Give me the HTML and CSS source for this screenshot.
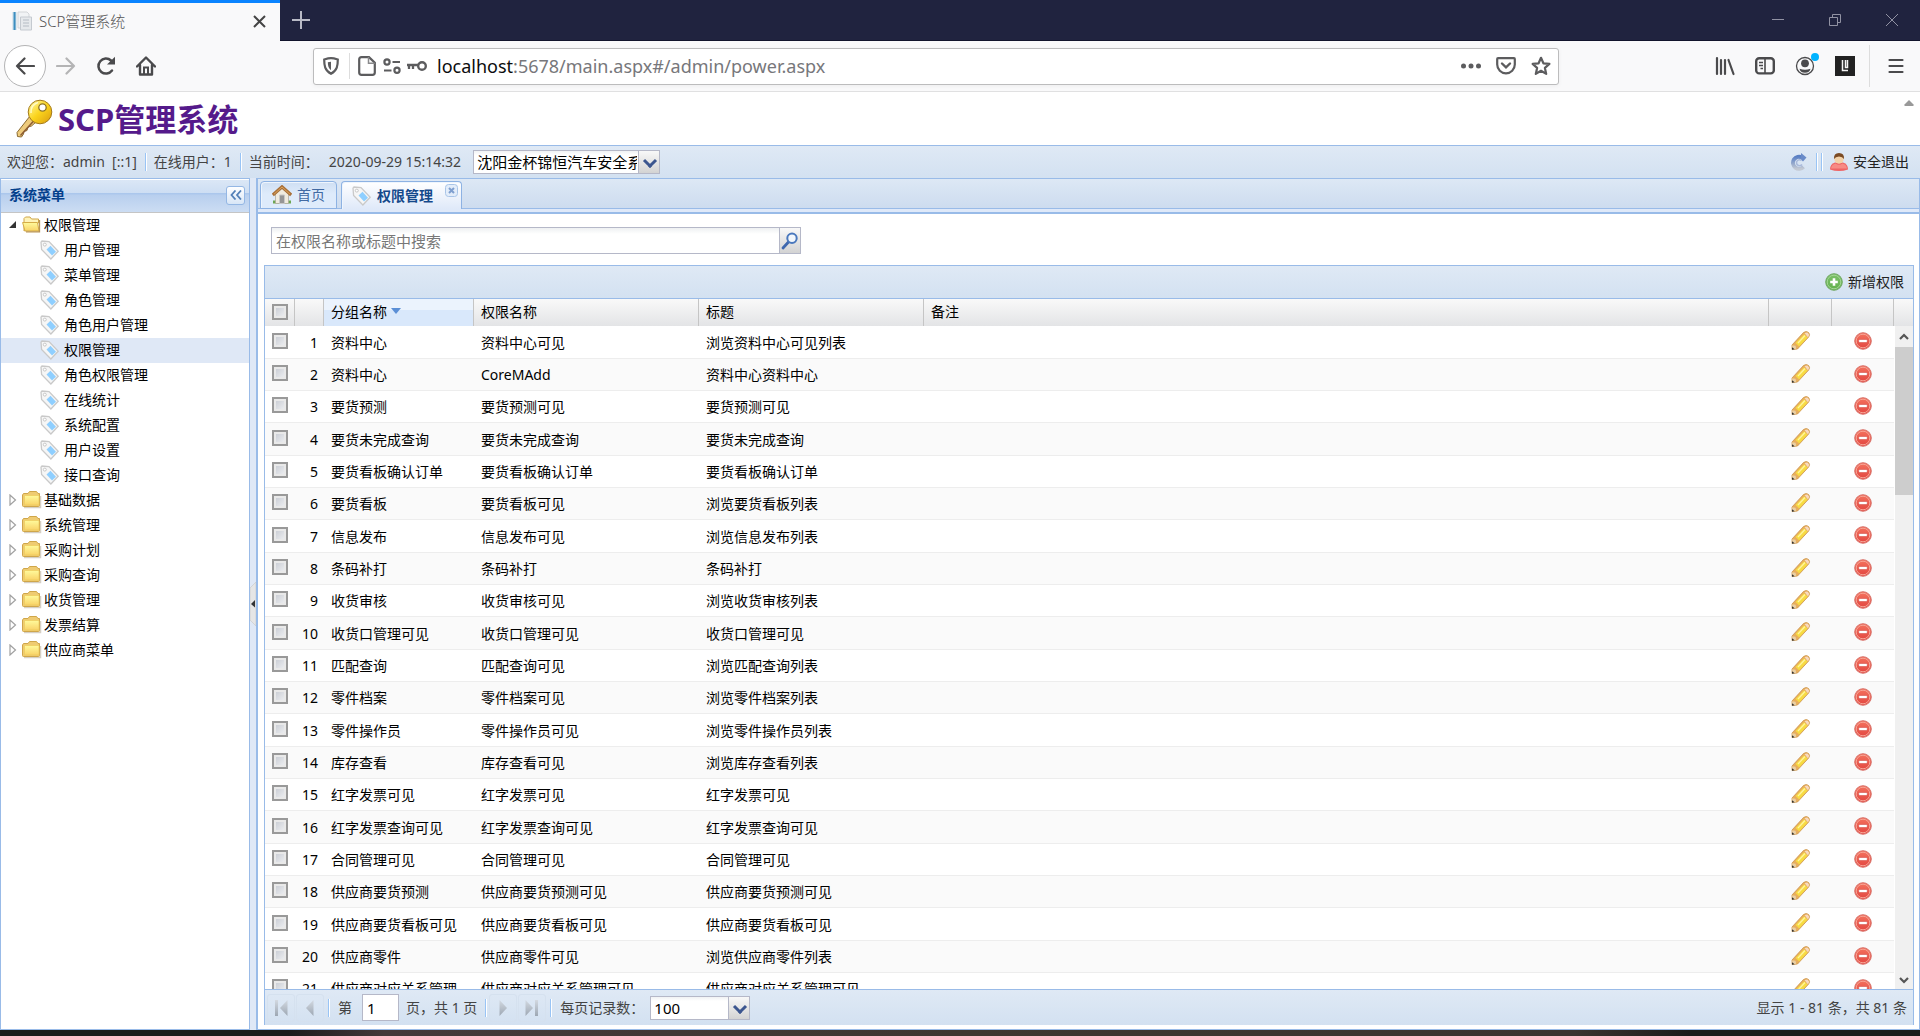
FILE: index.html
```html
<!DOCTYPE html>
<html lang="zh-CN">
<head>
<meta charset="utf-8">
<title>SCP管理系统</title>
<link rel="stylesheet" href="styles.css">
</head>
<body>
<svg class="sprite" aria-hidden="true">
  <defs>
    <linearGradient id="g-gold" x1="0" y1="0" x2="1" y2="1"><stop offset="0" stop-color="#fffbb0"/><stop offset=".5" stop-color="#fbd41c"/><stop offset="1" stop-color="#d99a10"/></linearGradient>
    <linearGradient id="g-folder" x1="0" y1="0" x2="0" y2="1"><stop offset="0" stop-color="#fffa9c"/><stop offset="1" stop-color="#f9d368"/></linearGradient>
    <linearGradient id="g-red" x1="0" y1="0" x2="0" y2="1"><stop offset="0" stop-color="#f4735f"/><stop offset="1" stop-color="#e2453f"/></linearGradient>
    <linearGradient id="g-green" x1="0" y1="0" x2="0" y2="1"><stop offset="0" stop-color="#7cc06a"/><stop offset="1" stop-color="#63b04c"/></linearGradient>
    <linearGradient id="g-gray" x1="0" y1="0" x2="0" y2="1"><stop offset="0" stop-color="#d3d9e1"/><stop offset="1" stop-color="#9da7b3"/></linearGradient>
    <linearGradient id="g-blue" x1="0" y1="0" x2="0" y2="1"><stop offset="0" stop-color="#5b80c4"/><stop offset="1" stop-color="#c3c9d3"/></linearGradient>
  </defs>
  <symbol id="tag" viewBox="0 0 20 20"><path d="M1 2.200 2 1l7 .6 9.200 9.600-7.300 7.800L1.600 9.500z" fill="#f6f6f6" stroke="#c9c9c9" stroke-width="1.300"/><path d="m6.500 9.500 4-3.700 5.500 6-4 3.700z" fill="#8fcfff"/><circle cx="4.800" cy="4.600" r="1.500" fill="#fff" stroke="#bbb" stroke-width=".8"/></symbol>
  <symbol id="folder" viewBox="0 0 20 20"><path d="M2 17.500h16.500V6" fill="none" stroke="#d5cfc4" stroke-width="1.500"/><path d="M.5 15.500V5l1-1.500h4.500L7.500 1.500h7L16 3.500h1.500v12q0 1-1 1h-15q-1 0-1-1z" fill="#efcb72" stroke="#cfa64a"/><path d="M2.500 5.500h14.500v9.500H2.500z" fill="url(#g-folder)" stroke="#edcb5c" stroke-width=".7"/></symbol>
  <symbol id="folder-open" viewBox="0 0 20 20"><path d="M2 16V3.500L3.500 2H8l1.500 2H16.500v4z" fill="#fff3b8" stroke="#cfa64a"/><path d="M.6 7.500h14.900l1.500 8.500H3z" fill="url(#g-folder)" stroke="#d5ac48"/><path d="M17.500 5v11.800H4" fill="none" stroke="#b99453" stroke-width="1.300"/></symbol>
  <symbol id="pencil" viewBox="0 0 20 20"><path d="m1 14 11.500-12.500q3-2 5 0 2 2 .2 4.500L6.500 18 1 18.600z" fill="#e8ae5c" stroke="#cb944a" stroke-width=".8"/><path d="m4.500 12 8.500-8.800 3.500 3.300-8.300 9z" fill="#f7dc42"/><path d="m7 12 7-7.500" stroke="#fff3a0" stroke-width="1.300"/><path d="m13.500 2 3-.5 1.800 2.200-1.300 2.800z" fill="#f8d9bd"/><path d="m1.200 14.300 3.300.4.800 3-4.100.9z" fill="#e9cfa4"/><path d="M1 16.200v2.500l2.600-.5z" fill="#333"/></symbol>
  <symbol id="minus" viewBox="0 0 18 18"><circle cx="9" cy="9" r="8.300" fill="url(#g-red)" stroke="#d9776f"/><circle cx="9" cy="9" r="6.800" fill="none" stroke="#f7a596"/><rect x="4.800" y="7.500" width="8.400" height="3" rx=".7" fill="#fff" stroke="#cf4038" stroke-width=".5"/></symbol>
  <symbol id="plus" viewBox="0 0 18 18"><circle cx="9" cy="9" r="8.300" fill="url(#g-green)" stroke="#73a867"/><circle cx="9" cy="9" r="6.800" fill="none" stroke="#a3d694"/><path d="M9 5.200v7.600M5.200 9h7.600" stroke="#fff" stroke-width="2.600"/></symbol>
</svg>

<div class="window">
  <header class="titlebar">
    <div class="browser-tab">
      <svg width="20" height="20" viewBox="0 0 20 20"><path d="M0 1h5v18H0z" fill="#3d8fc0"/><path d="M0 1h1.500v18H0zM3.600 1H5v18H3.600z" fill="#dfe9ef"/><path d="M6 1h9l2 2v14H6z" fill="#f1f3f5" stroke="#d3d6d9"/><path d="M8.500 6h11v13h-11z" fill="#e6e9ec" stroke="#c5cad0"/><path d="M11 9h6M11 12h6M11 15h6" stroke="#b5bcc4"/></svg>
      <span class="browser-tab-title">SCP管理系统</span>
      <button class="plain" aria-label="关闭标签页"><svg width="13" height="13" viewBox="0 0 13 13"><path d="m1 1 11 11M12 1 1 12" stroke="#444" stroke-width="2"/></svg></button>
    </div>
    <button class="plain new-tab" aria-label="新标签页"><svg width="18" height="18" viewBox="0 0 18 18"><path d="M9 0v18M0 9h18" stroke="#b9bac6" stroke-width="2"/></svg></button>
    <div class="window-controls">
      <button class="plain" aria-label="最小化"><svg width="14" height="14" viewBox="0 0 14 14"><path d="M1 6.500h12" stroke="#9192a3"/></svg></button>
      <button class="plain" aria-label="还原"><svg width="14" height="14" viewBox="0 0 14 14"><path d="M1.500 4.500h8v8h-8zM4.500 4V1.500h8v8H10" fill="none" stroke="#9192a3"/></svg></button>
      <button class="plain" aria-label="关闭"><svg width="14" height="14" viewBox="0 0 14 14"><path d="m1 1 12 12M13 1 1 13" stroke="#9192a3"/></svg></button>
    </div>
  </header>

  <nav class="navbar">
    <div class="nav-left">
      <button class="plain back" aria-label="后退"><svg width="20" height="20" viewBox="0 0 20 20"><path d="M19 10H2M9.500 2.500 2 10l7.500 7.500" fill="none" stroke="#4a4a4c" stroke-width="2.200" stroke-linecap="round" stroke-linejoin="round"/></svg></button>
      <button class="plain" aria-label="前进"><svg width="20" height="20" viewBox="0 0 20 20"><path d="M1 10h17M10.500 2.500 18 10l-7.500 7.500" fill="none" stroke="#b4b4b5" stroke-width="2.200" stroke-linecap="round" stroke-linejoin="round"/></svg></button>
      <button class="plain" aria-label="刷新"><svg width="20" height="20" viewBox="0 0 20 20"><path d="M16 14.500A7.500 7.500 0 1 1 15 4.500l2 2" fill="none" stroke="#4a4a4c" stroke-width="2.500" stroke-linecap="round"/><path d="M19 .8V8.500h-8z" fill="#4a4a4c"/></svg></button>
      <button class="plain" aria-label="主页"><svg width="20" height="20" viewBox="0 0 20 20"><path d="m1 10.500 9-9 9 9M4 9v9.500h12V9" fill="none" stroke="#4a4a4c" stroke-width="2.400" stroke-linecap="round" stroke-linejoin="round"/><path d="M8 19v-7.500h4V19" fill="none" stroke="#4a4a4c" stroke-width="2"/></svg></button>
    </div>
    <div class="urlbar">
      <span class="shield"><svg width="18" height="18" viewBox="0 0 18 18"><path d="M9 1.200c2.500 0 4.500.6 6.800 1.300 0 6-.5 11-6.800 14.300C2.700 13.500 2.200 8.500 2.200 2.500 4.500 1.800 6.500 1.200 9 1.200z" fill="none" stroke="#5c5c5e" stroke-width="2.200"/><path d="M9 4.800v8.400C6.300 11 5.900 8.500 5.800 5.200z" fill="#5c5c5e"/></svg></span>
      <svg class="ico-page" width="18" height="20" viewBox="0 0 18 20"><path d="M3.500 1.200H11l5.800 5.600v9.700q0 2.300-2.300 2.300h-11q-2.300 0-2.300-2.300v-13q0-2.300 2.300-2.300z" fill="none" stroke="#5c5c5e" stroke-width="2.200"/><path d="M10.500 1v6.300h6.300" fill="none" stroke="#8a8a8c" stroke-width="1.500"/></svg>
      <svg class="ico-perm" width="18" height="16" viewBox="0 0 18 16"><g fill="none" stroke="#5c5c5e" stroke-width="2.200"><circle cx="4" cy="4" r="2.600"/><path d="M9.500 4H17M1 12.500h7.500"/><circle cx="14" cy="12.300" r="2.600"/></g></svg>
      <svg class="ico-key" width="20" height="12" viewBox="0 0 20 12"><circle cx="15" cy="6" r="3.800" fill="none" stroke="#5c5c5e" stroke-width="2.400"/><path d="M0 5h11.500M2 5v4M6 5v4" stroke="#5c5c5e" stroke-width="2.300"/></svg>
      <span class="url"><b>localhost</b>:5678/main.aspx#/admin/power.aspx</span>
      <button class="plain" aria-label="页面操作"><svg width="20" height="6" viewBox="0 0 20 6"><g fill="#5c5c5e"><circle cx="2.500" cy="3" r="2.500"/><circle cx="10" cy="3" r="2.500"/><circle cx="17.500" cy="3" r="2.500"/></g></svg></button>
      <button class="plain" aria-label="保存到 Pocket"><svg width="20" height="18" viewBox="0 0 20 18"><path d="M2 1.200h16q.8 0 .8.800v5.500a8.800 8.800 0 0 1-17.600 0V2q0-.8.800-.8z" fill="none" stroke="#5c5c5e" stroke-width="2.200"/><path d="m6 6.500 4 3.900 4-3.900" fill="none" stroke="#5c5c5e" stroke-width="2.400" stroke-linecap="round"/></svg></button>
      <button class="plain" aria-label="加入书签"><svg width="20" height="20" viewBox="0 0 20 20"><path d="m10 1.800 2.400 5.500 6 .6-4.500 4 1.300 6L10 14.800l-5.200 3.100 1.300-6-4.500-4 6-.6z" fill="none" stroke="#5c5c5e" stroke-width="2.200" stroke-linejoin="round"/></svg></button>
    </div>
    <div class="nav-right">
      <button class="plain" aria-label="书签库"><svg width="20" height="20" viewBox="0 0 20 20"><path d="M2 2v16M6 4v14M10 4v14M13.500 4l5 14" stroke="#4a4a4c" stroke-width="2.200" stroke-linecap="round"/></svg></button>
      <button class="plain" aria-label="侧栏"><svg width="20" height="18" viewBox="0 0 20 18"><rect x="1.200" y="1.200" width="17.600" height="15.200" rx="3" fill="none" stroke="#4a4a4c" stroke-width="2.400"/><path d="M10 1v15" stroke="#4a4a4c" stroke-width="1.600"/><path d="M4 5.500h4M4 8.500h4M5.500 11.500H8" stroke="#4a4a4c" stroke-width="1.300"/></svg></button>
      <button class="plain account" aria-label="账户"><svg width="20" height="20" viewBox="0 0 20 20"><circle cx="10" cy="10" r="8.500" fill="none" stroke="#4a4a4c" stroke-width="1.300"/><circle cx="10" cy="7.300" r="3.900" fill="#4a4a4c"/><path d="M4.500 12.800q5.500 2 11 0-.8 4-5.500 4t-5.500-4z" fill="#4a4a4c"/></svg></button>
      <button class="plain" aria-label="扩展"><svg width="20" height="20" viewBox="0 0 20 20"><path d="M0 0h20v20H0z" fill="#222"/><path d="M7.500 4v10.500H13M12.500 4v7.500h-2V4" fill="none" stroke="#f4f4f4" stroke-width="1.500"/></svg></button>
      <i class="nav-sep"></i>
      <button class="plain" aria-label="菜单"><svg width="16" height="16" viewBox="0 0 16 16"><path d="M1.500 2h13M1.500 8h13M1.500 14h13" stroke="#4a4a4c" stroke-width="2.200" stroke-linecap="round"/></svg></button>
    </div>
  </nav>

  <header class="brand">
    <svg width="40" height="40" viewBox="0 0 40 40"><path d="m15 17-13 16.500.5 4 4 .5 2-3 .5-2.500 3-1 1-3.500 3.500-1L21 23z" fill="#eecb7c" stroke="#8a6a30"/><path d="M5.500 36.500 20 20.500" stroke="#8d5c33" stroke-width="1.600"/><circle cx="25" cy="13" r="11.800" fill="url(#g-gold)" stroke="#a47a1a"/><circle cx="27.500" cy="8.500" r="3.700" fill="#fff" stroke="#8d7322" stroke-width="1.300"/><path d="M16 14q-.5-8 7-10.500" fill="none" stroke="#fffbc8" stroke-width="1.500"/></svg>
    <h1>SCP管理系统</h1>
    <svg class="collapse-mark" width="10" height="6" viewBox="0 0 10 6"><path d="m5 0 4.500 4.500V6H.5V4.500z" fill="#999"/></svg>
  </header>

  <div class="statusbar">
    <span class="who">欢迎您：admin&nbsp; [::1]</span>
    <span class="online">在线用户：1</span>
    <span class="now">当前时间：</span>
    <time>2020-09-29 15:14:32</time>
    <span class="combo combo-org"><select aria-label="组织"><option>沈阳金杯锦恒汽车安全系统</option></select><i></i></span>
    <button class="plain refresh" aria-label="刷新页面"><svg width="17" height="18" viewBox="0 0 17 18"><path d="M12.500 13.800A6 6 0 1 1 11 4.600" fill="none" stroke="url(#g-blue)" stroke-width="4"/><path d="m10 0 5.500 4.500-3.500 4-2-2z" fill="#6a8bc8"/><path d="M11 11.500a3 3 0 1 1-.5-4" fill="none" stroke="#a9b9da" stroke-width="1.500"/></svg></button>
    <i class="sep"></i><i class="sep"></i>
    <button class="plain logout"><svg width="18" height="18" viewBox="0 0 18 18"><path d="M0 16.500q0-5.500 5-7h8q5 1.500 5 7-9 3-18 0z" fill="#ef6465"/><path d="M1 15.500q.5-4 4.500-5 3.500 2.500 7 0 4 1 4.500 5z" fill="#f78b85"/><circle cx="9" cy="6" r="4.700" fill="#f3d2a8"/><path d="M4 6Q3.500 0 9 0t5 6q-1.500-2.500-5-2.500T4 6z" fill="#7b4b24"/></svg>安全退出</button>
  </div>

  <div class="workspace">
    <aside class="sidebar">
      <div class="panel-title"><h2>系统菜单</h2><button class="plain collapse" aria-label="收起"><svg width="12" height="10" viewBox="0 0 12 10"><path d="M5.500.5 1.500 5l4 4.500M11 .5 7 5l4 4.500" fill="none" stroke="#5381b8" stroke-width="1.800"/></svg></button></div>
      <ul class="tree" id="tree"></ul>
    </aside>
    <div class="splitter"><button class="plain split-grip" aria-label="收起侧栏"><svg width="6" height="44" viewBox="0 0 6 44"><path d="M6 0 0 6v32l6 6z" fill="#e6e6e6" stroke="#c8c8c8" stroke-width=".6"/><path d="M5 18v7.500L1 22z" fill="#333"/></svg></button></div>
    <main class="main">
      <div class="tabs">
        <button class="tab"><svg width="20" height="20" viewBox="0 0 20 20"><path d="M1 15.500h18v3H1z" fill="#6da653"/><path d="M3.500 9 10 3.500 16.500 9v9.500h-13z" fill="#f0ebdf" stroke="#aaa394" stroke-width=".7"/><path d="M7.500 10h5v8.500h-5z" fill="#959595" stroke="#c8c8c8"/><path d="M.8 10 10 1.800 19.200 10" fill="none" stroke="#a9713a" stroke-width="3.200"/><path d="M2 9.200 10 2l8 7.200" fill="none" stroke="#dda45c" stroke-width="1"/></svg>首页</button>
        <button class="tab active"><svg width="20" height="20"><use href="#tag"/></svg>权限管理<span class="tab-close"><svg width="13" height="13" viewBox="0 0 13 13"><rect x=".5" y=".5" width="12" height="12" rx="3" fill="#e3edfa" stroke="#a9c5e8"/><path d="m4 4 5 5M9 4 4 9" stroke="#7f9fcf" stroke-width="2"/></svg></span></button>
      </div>
      <div class="content">
        <form class="search">
          <input type="text" aria-label="搜索" placeholder="在权限名称或标题中搜索">
          <button type="button" class="plain" aria-label="搜索"><svg width="18" height="18" viewBox="0 0 18 18"><path d="M7.500 10 2 16" stroke="#3f68ae" stroke-width="2.800" stroke-linecap="round"/><circle cx="11" cy="6.300" r="4.700" fill="#f2f7fc" stroke="#4a78bd" stroke-width="2"/></svg></button>
        </form>
        <section class="grid">
          <div class="grid-toolbar"><button class="plain"><svg width="18" height="18"><use href="#plus"/></svg>新增权限</button></div>
          <table class="grid-table grid-head">
            <colgroup><col class="c-check"><col class="c-num"><col class="c-group"><col class="c-name"><col class="c-name"><col><col class="c-edit"><col class="c-del"><col class="c-gutter"></colgroup>
            <thead><tr><th><input type="checkbox" aria-label="全选"></th><th></th><th class="sorted">分组名称<svg width="10" height="6" viewBox="0 0 10 6"><path d="M0 0h10L5 6z" fill="#5b8fd6"/></svg></th><th>权限名称</th><th>标题</th><th>备注</th><th></th><th></th><th></th></tr></thead>
          </table>
          <div class="grid-body">
            <div class="rows">
              <table class="grid-table">
                <colgroup><col class="c-check"><col class="c-num"><col class="c-group"><col class="c-name"><col class="c-name"><col><col class="c-edit"><col class="c-del"></colgroup>
                <tbody id="rows"></tbody>
              </table>
            </div>
            <div class="scroll">
              <svg width="18" height="21" viewBox="0 0 18 21"><path d="m5 13 4-4 4 4" fill="none" stroke="#555" stroke-width="2.200"/></svg>
              <i class="thumb"></i>
              <svg class="down" width="18" height="20" viewBox="0 0 18 20"><path d="m5 9 4 4 4-4" fill="none" stroke="#555" stroke-width="2.200"/></svg>
            </div>
          </div>
          <footer class="pager">
            <button class="plain page-btn" aria-label="首页"><svg width="14" height="18" viewBox="0 0 14 18"><path d="M1 1h3v16H1zM13.500 1v16L6 9z" fill="url(#g-gray)"/></svg></button>
            <button class="plain page-btn" aria-label="上一页"><svg width="14" height="18" viewBox="0 0 14 18"><path d="M10.500 1v16L3 9z" fill="url(#g-gray)"/></svg></button>
            <i class="sep"></i>
            <label for="page">第</label><input id="page" type="text" value="1"><span>页，共 1 页</span>
            <i class="sep"></i>
            <button class="plain page-btn" aria-label="下一页"><svg width="14" height="18" viewBox="0 0 14 18"><path d="M3.500 1v16L11 9z" fill="url(#g-gray)"/></svg></button>
            <button class="plain page-btn" aria-label="末页"><svg width="14" height="18" viewBox="0 0 14 18"><path d="M.5 1v16L8 9zM10 1h3v16h-3z" fill="url(#g-gray)"/></svg></button>
            <i class="sep"></i>
            <label for="size">每页记录数：</label>
            <span class="combo combo-size"><select id="size"><option>100</option></select><i></i></span>
            <span class="summary">显示 1 - 81 条，共 81 条</span>
          </footer>
        </section>
      </div>
    </main>
  </div>
  <div class="desktop-edge"></div>
</div>
<script src="app.js"></script>
</body>
</html>
```
FILE: styles.css
```css
* { box-sizing: border-box; }
body {
  margin: 0;
  font: 14px/20px "Noto Sans", "Noto Sans CJK SC", sans-serif;
  color: #000;
  overflow: hidden;
}
button, input, select { font: inherit; color: inherit; }
svg { display: block; flex: none; }
h1, h2 { margin: 0; }
.sprite { position: absolute; width: 0; height: 0; }
.plain { display: flex; align-items: center; justify-content: center; padding: 0; border: 0; background: none; }
.window { display: flex; flex-direction: column; height: 100vh; }

/* browser chrome */
.titlebar { display: flex; flex: none; height: 41px; background: #20233f; border-bottom: 1px solid #12142c; }
.browser-tab { display: flex; align-items: center; gap: 7px; width: 280px; height: 41px; padding: 0 14px 2px 12px; background: #f9f9fa; border-top: 3px solid #0a84ff; font-size: 15px; color: #555; }
.browser-tab-title { flex: 1; font-weight: 300; }
.new-tab { width: 42px; }
.window-controls { display: flex; margin-left: auto; }
.window-controls .plain { width: 57px; }
.navbar { display: flex; flex: none; align-items: center; height: 51px; background: #f9f9fa; border-bottom: 1px solid #e0e0e1; }
.nav-left { display: flex; width: 313px; padding-left: 4px; }
.nav-left .plain { width: 40px; height: 42px; }
.nav-left .back { width: 42px; border: 1px solid #b4b4b5; border-radius: 50%; background: #fff; }
.urlbar { display: flex; flex: 1; align-items: center; height: 37px; border: 1px solid #bcbcbd; border-radius: 3px; background: #fff; box-shadow: 0 1px 4px #0000000d; }
.urlbar .plain { width: 35px; height: 35px; }
.shield { width: 36px; height: 26px; padding: 4px 0 0 8px; border-right: 1px solid #ddd; }
.ico-page { margin: 0 7px 0 8px; }
.ico-key { margin: 0 10px 0 6px; }
.url { flex: 1; font-size: 18px; line-height: 24px; color: #77777b; }
.url b { font-weight: 400; color: #0c0c0d; }
.nav-right { display: flex; align-items: center; justify-content: flex-end; width: 361px; padding-right: 4px; }
.nav-right .plain { width: 40px; height: 40px; }
.nav-sep { width: 1px; height: 42px; margin: 0 6px 0 4px; background: #ddd; }
.account { position: relative; }
.account::after { content: ""; position: absolute; top: 7px; right: 6px; width: 8px; height: 8px; border-radius: 50%; background: #00b3ff; }

/* application header */
.brand { display: flex; flex: none; align-items: center; gap: 3px; height: 53px; padding: 0 6px 0 15px; background: #fff; }
.brand h1 { font-size: 31px; line-height: 40px; color: #551a8b; }
.collapse-mark { align-self: flex-start; margin: 8px 0 0 auto; }
.statusbar { display: flex; flex: none; align-items: center; height: 33px; padding: 0 11px 0 7px; border-top: 1px solid #99bbe8; background: linear-gradient(#dfe9f5, #d3e1f1); color: #444; }
.who, .online { padding-right: 8px; margin-right: 8px; border-right: 1px solid #99c4f5; line-height: 18px; box-shadow: 1px 0 #fff; }
.statusbar time { margin: 0 12px 0 10px; }
.combo { position: relative; display: flex; }
.combo select { width: 100%; height: 24px; padding: 0 22px 0 3px; border: 1px solid #b5b8c8; border-radius: 0; background: linear-gradient(#f0f2f4, #fff 4px); appearance: none; color: #000; }
.combo i { position: absolute; top: 0; right: 0; width: 22px; height: 100%; border: 1px solid #b5b8c8; background: linear-gradient(#f8f8f8, #d3d3d3); pointer-events: none; }
.combo i::after { content: ""; position: absolute; left: 6px; top: 5px; width: 7px; height: 7px; border: solid #3c568f; border-width: 0 3px 3px 0; rotate: 45deg; }
.combo-org { width: 187px; font-size: 15px; }
.refresh { margin: 0 8px 0 auto; }
.sep { width: 2px; height: 18px; border-left: 1px solid #99c4f5; background: #fff; }
.sep + .sep { margin-left: 3px; }
.logout { gap: 5px; margin-left: 7px; color: #222; }

/* work area */
.workspace { display: flex; flex: 1; min-height: 0; background: #dfe8f6; }
.sidebar { display: flex; flex-direction: column; width: 250px; border: 1px solid #99bbe8; background: #fff; }
.panel-title { display: flex; justify-content: space-between; align-items: center; height: 34px; padding: 0 4px 1px 8px; border-bottom: 1px solid #c5c5c5; background: linear-gradient(#fff 0 1px, #dbe7f6 1px, #cddef3 14px, #abc7ec 14px 15px, #b8cfee 16px, #ccddf3); }
.panel-title h2 { font-size: 14px; line-height: 20px; color: #04408c; }
.collapse { width: 19px; height: 19px; border: 1px solid #94b7e4; border-radius: 3px; background: linear-gradient(#fff, #d8e6f7); }
.tree { margin: 0; padding: 0; list-style: none; }
.tree li { display: flex; align-items: center; height: 25px; padding: 0 0 2px 7px; }
.tree .arrow { width: 9px; margin-right: 5px; }
.tree .arrow + svg { margin-right: 2px; }
.tree .leaf { padding-left: 39px; gap: 4px; }
.tree a { color: inherit; text-decoration: none; }
.tree .selected { background: #dfe8f6; }
.splitter { display: flex; align-items: center; width: 6px; }
.main { display: flex; flex: 1; flex-direction: column; min-width: 0; border: 1px solid #99bbe8; border-left-width: 2px; background: #fff; }
.tabs { display: flex; flex: none; align-items: flex-end; gap: 4px; height: 35px; padding: 0 2px 3px; border-bottom: 2px solid #99bbe8; background: linear-gradient(#dde8f5, #cddcef 29px, #99bbe8 29px 30px, #dfe9f9 30px); }
.tab { display: flex; align-items: center; gap: 5px; height: 28px; padding: 0 11px; border: 1px solid #8db2e3; border-radius: 4px 4px 0 0; background: linear-gradient(#cfdff3, #deebfb 12px); box-shadow: inset 1px 1px #eef5fd; color: #416aa3; }
.tab.active { position: relative; padding: 0 28px 0 10px; border-bottom: 0; background: linear-gradient(#fff, #dfe9f9); color: #15498b; font-weight: 700; }
.tab-close { position: absolute; top: 2px; right: 3px; }
.content { display: flex; flex: 1; flex-direction: column; min-height: 0; padding: 13px 5px 4px 6px; }
.search { display: flex; flex: none; width: 530px; height: 27px; margin: 0 0 11px 7px; }
.search input { flex: 1; min-width: 0; padding: 0 4px; border: 1px solid #b5b8c8; background: linear-gradient(#eef0f2, #fff 6px); font-size: 15px; }
.search input::placeholder { color: #777; }
.search .plain { width: 22px; margin-left: -1px; border: 1px solid #b5b8c8; background: linear-gradient(#f8f8f8, #d3d3d3); }

/* data grid */
.grid { display: flex; flex: 1; flex-direction: column; min-height: 0; border: solid #99bbe8; border-width: 1px 1px 0; }
.grid-toolbar { display: flex; flex: none; justify-content: flex-end; height: 33px; padding: 0 9px; border-bottom: 1px solid #99bbe8; background: linear-gradient(#dfe9f5, #d3e1f1); }
.grid-toolbar .plain { gap: 5px; color: #222; }
.grid-table { width: 100%; border-collapse: separate; border-spacing: 0; table-layout: fixed; }
.c-check { width: 30px; }
.c-num { width: 29px; }
.c-group { width: 150px; }
.c-name { width: 225px; }
.c-edit { width: 63px; }
.c-del { width: 62px; }
.c-gutter { width: 19px; }
.grid-head { flex: none; }
.grid-head th { height: 27px; padding: 0 7px 1px; border-right: 1px solid #c5c5c5; background: linear-gradient(#f9f9f9, #e3e4e6); font-weight: 400; text-align: left; }
.grid-head th:last-child { border-right: 0; }
.grid-head .sorted { background: linear-gradient(#ebf3fd 0 11px, #d9e8fb 11px); }
.grid-head .sorted svg { display: inline-block; margin-left: 4px; vertical-align: 3px; }
.grid-body { display: flex; flex: 1; min-height: 0; }
.rows { flex: 1; min-width: 0; overflow: hidden; }
.rows td { height: 32px; padding: 1px 7px 0; border-bottom: 1px solid #ededed; white-space: nowrap; overflow: hidden; }
.rows tr:nth-child(3n+1) td { height: 33px; }
.rows tr:nth-child(even) td { background: #fafafa; }
.rows .num { padding: 1px 6px 0 0; text-align: right; }
.rows .plain { margin: 0 auto; padding-bottom: 3px; }
.rows .check { padding: 0 7px 3px; }
input[type="checkbox"] { display: block; width: 16px; height: 16px; margin: 0; appearance: none; border: 2px solid #999; background: linear-gradient(135deg, #c4c8d0, #f2f3f5); box-shadow: inset 0 0 0 2px #e9e9e9; }
.scroll { display: flex; flex-direction: column; width: 18px; margin-left: 1px; background: #f0f0f0; }
.thumb { height: 148px; background: #cdcdcd; }
.down { margin-top: auto; }

.pager { display: flex; flex: none; align-items: center; height: 36px; padding: 0 6px 0 1px; border-top: 1px solid #99bbe8; background: linear-gradient(#dfe9f5, #d3e1f1); color: #444; }
.page-btn { width: 28px; height: 28px; margin-left: 1px; border: 1px solid #d5e1ef; border-radius: 3px; }
.pager .sep { margin: 0 8px 0 4px; }
.pager input { width: 37px; height: 27px; margin: 0 7px 0 10px; padding: 0 4px; border: 1px solid #b5b8c8; background: #fff; color: #000; font-size: 15px; }
.pager .sep:has(+ .page-btn) { margin: 0 1px 0 8px; }
.combo-size { width: 100px; margin-left: 6px; font-size: 15px; }
.summary { margin-left: auto; }
.desktop-edge { flex: none; height: 6px; background: linear-gradient(90deg, #1c1b1b 15%, #44393a 20%, #3e3730 50%, #3a3430 82%, #1c1b1b 88%); }
```
FILE: app.js
```js
const icon = (name, size) => `<svg width="${size}" height="${size}"><use href="#${name}"/></svg>`;

const leaves = ["用户管理", "菜单管理", "角色管理", "角色用户管理", "权限管理", "角色权限管理", "在线统计", "系统配置", "用户设置", "接口查询"];
const folders = ["基础数据", "系统管理", "采购计划", "采购查询", "收货管理", "发票结算", "供应商菜单"];
const opened = '<svg class="arrow" width="9" height="9" viewBox="0 0 9 9"><path d="M8 1v7H1z" fill="#333"/></svg>';
const closed = '<svg class="arrow" width="9" height="12" viewBox="0 0 9 12"><path d="M2 1v10L7.500 6z" fill="#fff" stroke="#a0a0a0" stroke-width="1.200"/></svg>';

document.getElementById("tree").innerHTML =
  `<li>${opened}${icon("folder-open", 20)}<a href="#">权限管理</a></li>` +
  leaves.map(t => `<li class="leaf${t === "权限管理" ? " selected" : ""}">${icon("tag", 20)}<a href="#">${t}</a></li>`).join("") +
  folders.map(t => `<li>${closed}${icon("folder", 20)}<a href="#">${t}</a></li>`).join("");

const records = [
  ["资料中心", "资料中心可见", "浏览资料中心可见列表"],
  ["资料中心", "CoreMAdd", "资料中心资料中心"],
  ["要货预测", "要货预测可见", "要货预测可见"],
  ["要货未完成查询", "要货未完成查询", "要货未完成查询"],
  ["要货看板确认订单", "要货看板确认订单", "要货看板确认订单"],
  ["要货看板", "要货看板可见", "浏览要货看板列表"],
  ["信息发布", "信息发布可见", "浏览信息发布列表"],
  ["条码补打", "条码补打", "条码补打"],
  ["收货审核", "收货审核可见", "浏览收货审核列表"],
  ["收货口管理可见", "收货口管理可见", "收货口管理可见"],
  ["匹配查询", "匹配查询可见", "浏览匹配查询列表"],
  ["零件档案", "零件档案可见", "浏览零件档案列表"],
  ["零件操作员", "零件操作员可见", "浏览零件操作员列表"],
  ["库存查看", "库存查看可见", "浏览库存查看列表"],
  ["红字发票可见", "红字发票可见", "红字发票可见"],
  ["红字发票查询可见", "红字发票查询可见", "红字发票查询可见"],
  ["合同管理可见", "合同管理可见", "合同管理可见"],
  ["供应商要货预测", "供应商要货预测可见", "供应商要货预测可见"],
  ["供应商要货看板可见", "供应商要货看板可见", "供应商要货看板可见"],
  ["供应商零件", "供应商零件可见", "浏览供应商零件列表"],
  ["供应商对应关系管理", "供应商对应关系管理可见", "供应商对应关系管理可见"]
];

document.getElementById("rows").innerHTML = records.map(([group, name, title], i) => `<tr>
  <td class="check"><input type="checkbox" aria-label="选择第 ${i + 1} 行"></td><td class="num">${i + 1}</td>
  <td>${group}</td><td>${name}</td><td>${title}</td><td></td>
  <td><button class="plain" aria-label="编辑">${icon("pencil", 20)}</button></td>
  <td><button class="plain" aria-label="删除">${icon("minus", 18)}</button></td></tr>`).join("");
```
